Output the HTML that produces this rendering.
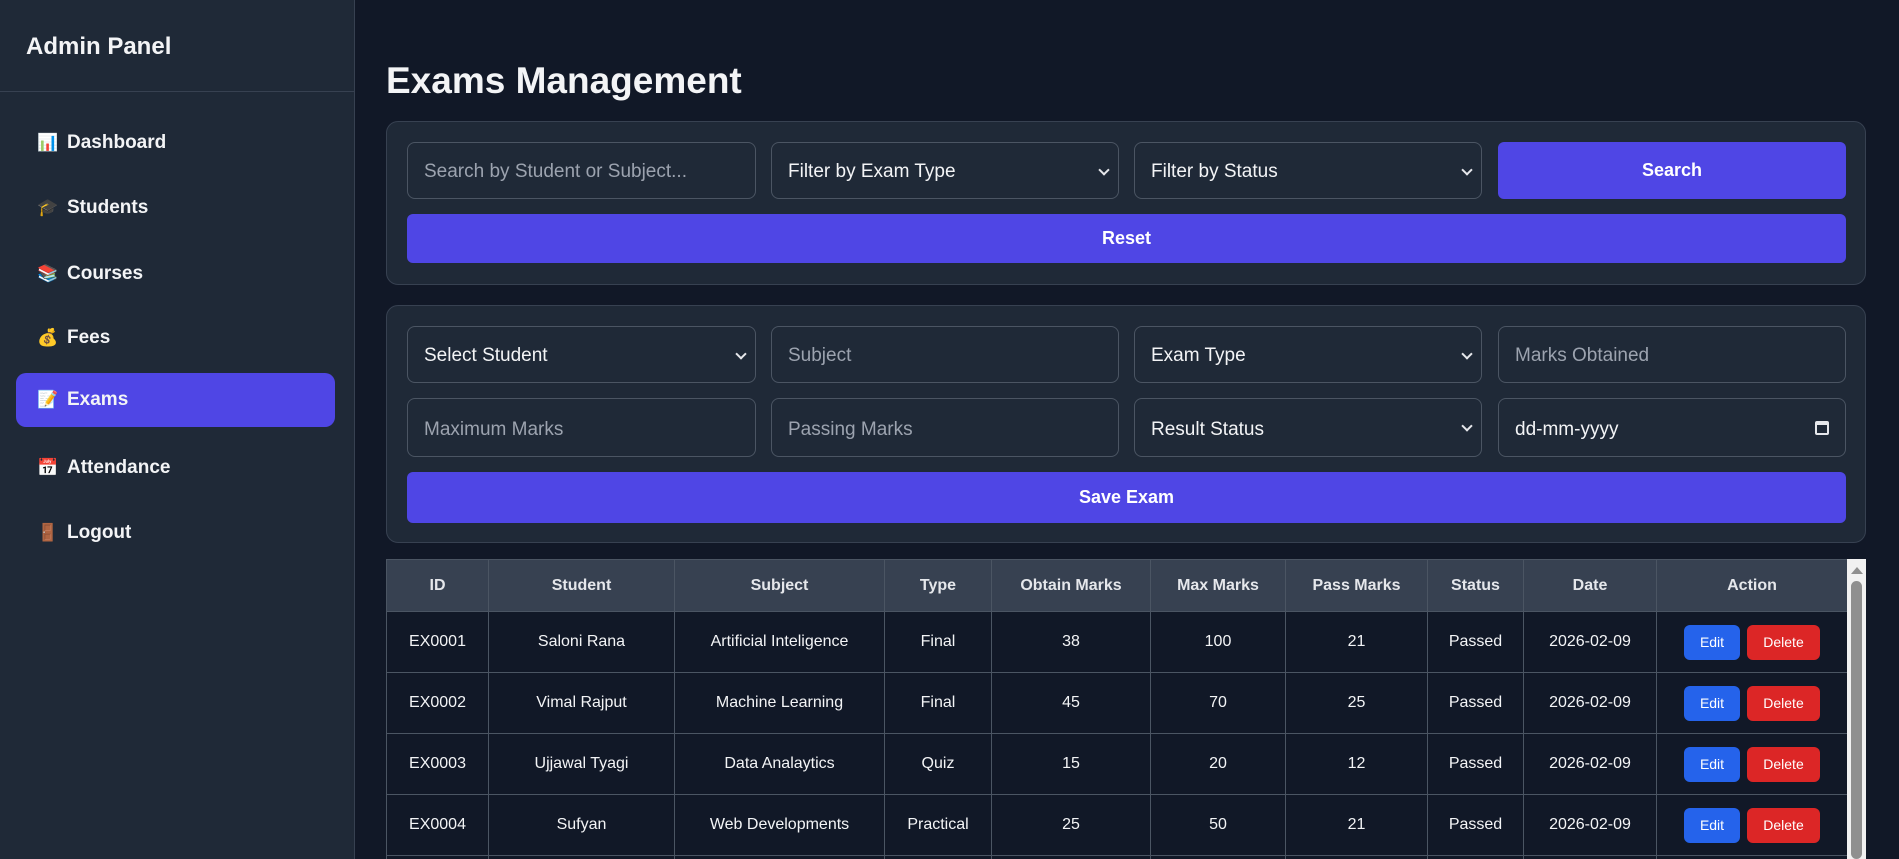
<!DOCTYPE html>
<html><head><meta charset="utf-8"><style>
*{box-sizing:border-box;margin:0;padding:0}
html{width:1899px;height:859px;overflow:hidden}
body{width:1899px;height:859px;overflow:hidden;background:#111827;font-family:"Liberation Sans",Arial,sans-serif;color:#f3f4f6;position:relative}
.side{position:absolute;left:0;top:0;width:355px;height:859px;background:#1f2937;border-right:1px solid #374151}
.side h2{position:absolute;left:26px;top:33px;font-size:24px;font-weight:bold;color:#f3f4f6}
.side .hr{position:absolute;left:0;top:91px;width:354px;height:1px;background:#374151}
.nav{position:absolute;left:16px;width:319px;height:54px;border-radius:10px;font-size:19px;font-weight:bold;line-height:54px;padding-left:21px;color:#f3f4f6}
.nav.act{background:#4f46e5}
.nav i{font-style:normal;display:inline-block;width:24px;font-size:17px;margin-right:6px}
h1{position:absolute;left:386px;top:60px;font-size:37px;font-weight:bold;color:#f3f4f6}
.card{position:absolute;left:386px;width:1480px;background:#1f2937;border:1px solid #374151;border-radius:12px}
.f{position:absolute;height:57px;border:1px solid #4b5563;border-radius:8px;background:#1f2937;font-size:19px;line-height:57px;padding-left:16px;color:#f3f4f6}
.f.p{color:#9ca3af}
.f.s::after{content:"";position:absolute;right:10px;top:23px;width:6px;height:6px;border-right:2px solid #e5e7eb;border-bottom:2px solid #e5e7eb;transform:rotate(45deg)}
.btn{position:absolute;background:#4f46e5;border-radius:6px;color:#fff;font-weight:bold;font-size:18px;text-align:center}
.tw{position:absolute;left:386px;top:559px;width:1461px;height:300px;overflow:hidden}
table{width:1461px;border-collapse:collapse;font-size:16px;table-layout:fixed}
th{background:#374151;height:52px;font-weight:bold;color:#e5e7eb}
td{height:61px;background:#111827;color:#f3f4f6}
th,td{border:1px solid #4b5563;text-align:center;white-space:nowrap}
.e,.d{display:inline-block;height:35px;line-height:35px;border-radius:6px;font-size:14px;color:#fff}
.e{background:#2563eb;width:56px}.d{background:#dc2626;width:73px;margin-left:7px}
.sb{position:absolute;left:1847px;top:559px;width:19px;height:300px;background:#f1f1f1}
.sb .th{position:absolute;left:4px;top:22px;width:11px;height:278px;background:#8f8f8f;border-radius:6px}
.sb .ar{position:absolute;left:4px;top:8px;width:0;height:0;border-left:6px solid transparent;border-right:6px solid transparent;border-bottom:7px solid #8f8f8f}
</style></head><body>
<div class="side"><h2>Admin Panel</h2><div class="hr"></div>
<div class="nav" style="top:116px"><i>📊</i>Dashboard</div>
<div class="nav" style="top:181px"><i>🎓</i>Students</div>
<div class="nav" style="top:247px"><i>📚</i>Courses</div>
<div class="nav" style="top:311px"><i>💰</i>Fees</div>
<div class="nav act" style="top:373px"><i>📝</i>Exams</div>
<div class="nav" style="top:441px"><i>📅</i>Attendance</div>
<div class="nav" style="top:506px"><i>🚪</i>Logout</div>
</div>
<h1>Exams Management</h1>
<div class="card" style="top:121px;height:164px"></div>
<div class="f p" style="left:407px;top:142px;width:349px">Search by Student or Subject...</div>
<div class="f s" style="left:771px;top:142px;width:348px">Filter by Exam Type</div>
<div class="f s" style="left:1134px;top:142px;width:348px">Filter by Status</div>
<div class="btn" style="left:1498px;top:142px;width:348px;height:57px;line-height:57px">Search</div>
<div class="btn" style="left:407px;top:214px;width:1439px;height:49px;line-height:49px">Reset</div>
<div class="card" style="top:305px;height:238px"></div>
<div class="f s" style="left:407px;top:326px;width:349px">Select Student</div>
<div class="f p" style="left:771px;top:326px;width:348px">Subject</div>
<div class="f s" style="left:1134px;top:326px;width:348px">Exam Type</div>
<div class="f p" style="left:1498px;top:326px;width:348px">Marks Obtained</div>
<div class="f p" style="left:407px;top:398px;width:349px;height:59px;line-height:61px">Maximum Marks</div>
<div class="f p" style="left:771px;top:398px;width:348px;height:59px;line-height:61px">Passing Marks</div>
<div class="f s" style="left:1134px;top:398px;width:348px;height:59px;line-height:61px">Result Status</div>
<div class="f" style="left:1498px;top:398px;width:348px;height:59px;line-height:61px">dd-mm-yyyy<span style="position:absolute;right:16px;top:22px;width:14px;height:14px;border:2px solid #e5e7eb;border-top-width:4px;border-radius:2px"></span></div>
<div class="btn" style="left:407px;top:472px;width:1439px;height:51px;line-height:51px">Save Exam</div>
<div class="tw"><table>
<colgroup><col style="width:102px"><col style="width:186px"><col style="width:210px"><col style="width:107px"><col style="width:159px"><col style="width:135px"><col style="width:142px"><col style="width:96px"><col style="width:133px"><col style="width:191px"></colgroup>
<tr><th>ID</th><th>Student</th><th>Subject</th><th>Type</th><th>Obtain Marks</th><th>Max Marks</th><th>Pass Marks</th><th>Status</th><th>Date</th><th>Action</th></tr>
<tr><td>EX0001</td><td>Saloni Rana</td><td>Artificial Inteligence</td><td>Final</td><td>38</td><td>100</td><td>21</td><td>Passed</td><td>2026-02-09</td><td><span class="e">Edit</span><span class="d">Delete</span></td></tr>
<tr><td>EX0002</td><td>Vimal Rajput</td><td>Machine Learning</td><td>Final</td><td>45</td><td>70</td><td>25</td><td>Passed</td><td>2026-02-09</td><td><span class="e">Edit</span><span class="d">Delete</span></td></tr>
<tr><td>EX0003</td><td>Ujjawal Tyagi</td><td>Data Analaytics</td><td>Quiz</td><td>15</td><td>20</td><td>12</td><td>Passed</td><td>2026-02-09</td><td><span class="e">Edit</span><span class="d">Delete</span></td></tr>
<tr><td>EX0004</td><td>Sufyan</td><td>Web Developments</td><td>Practical</td><td>25</td><td>50</td><td>21</td><td>Passed</td><td>2026-02-09</td><td><span class="e">Edit</span><span class="d">Delete</span></td></tr>
<tr><td>EX0005</td><td></td><td></td><td></td><td></td><td></td><td></td><td></td><td></td><td></td></tr>
</table></div>
<div class="sb"><div class="ar"></div><div class="th"></div></div>
</body></html>
